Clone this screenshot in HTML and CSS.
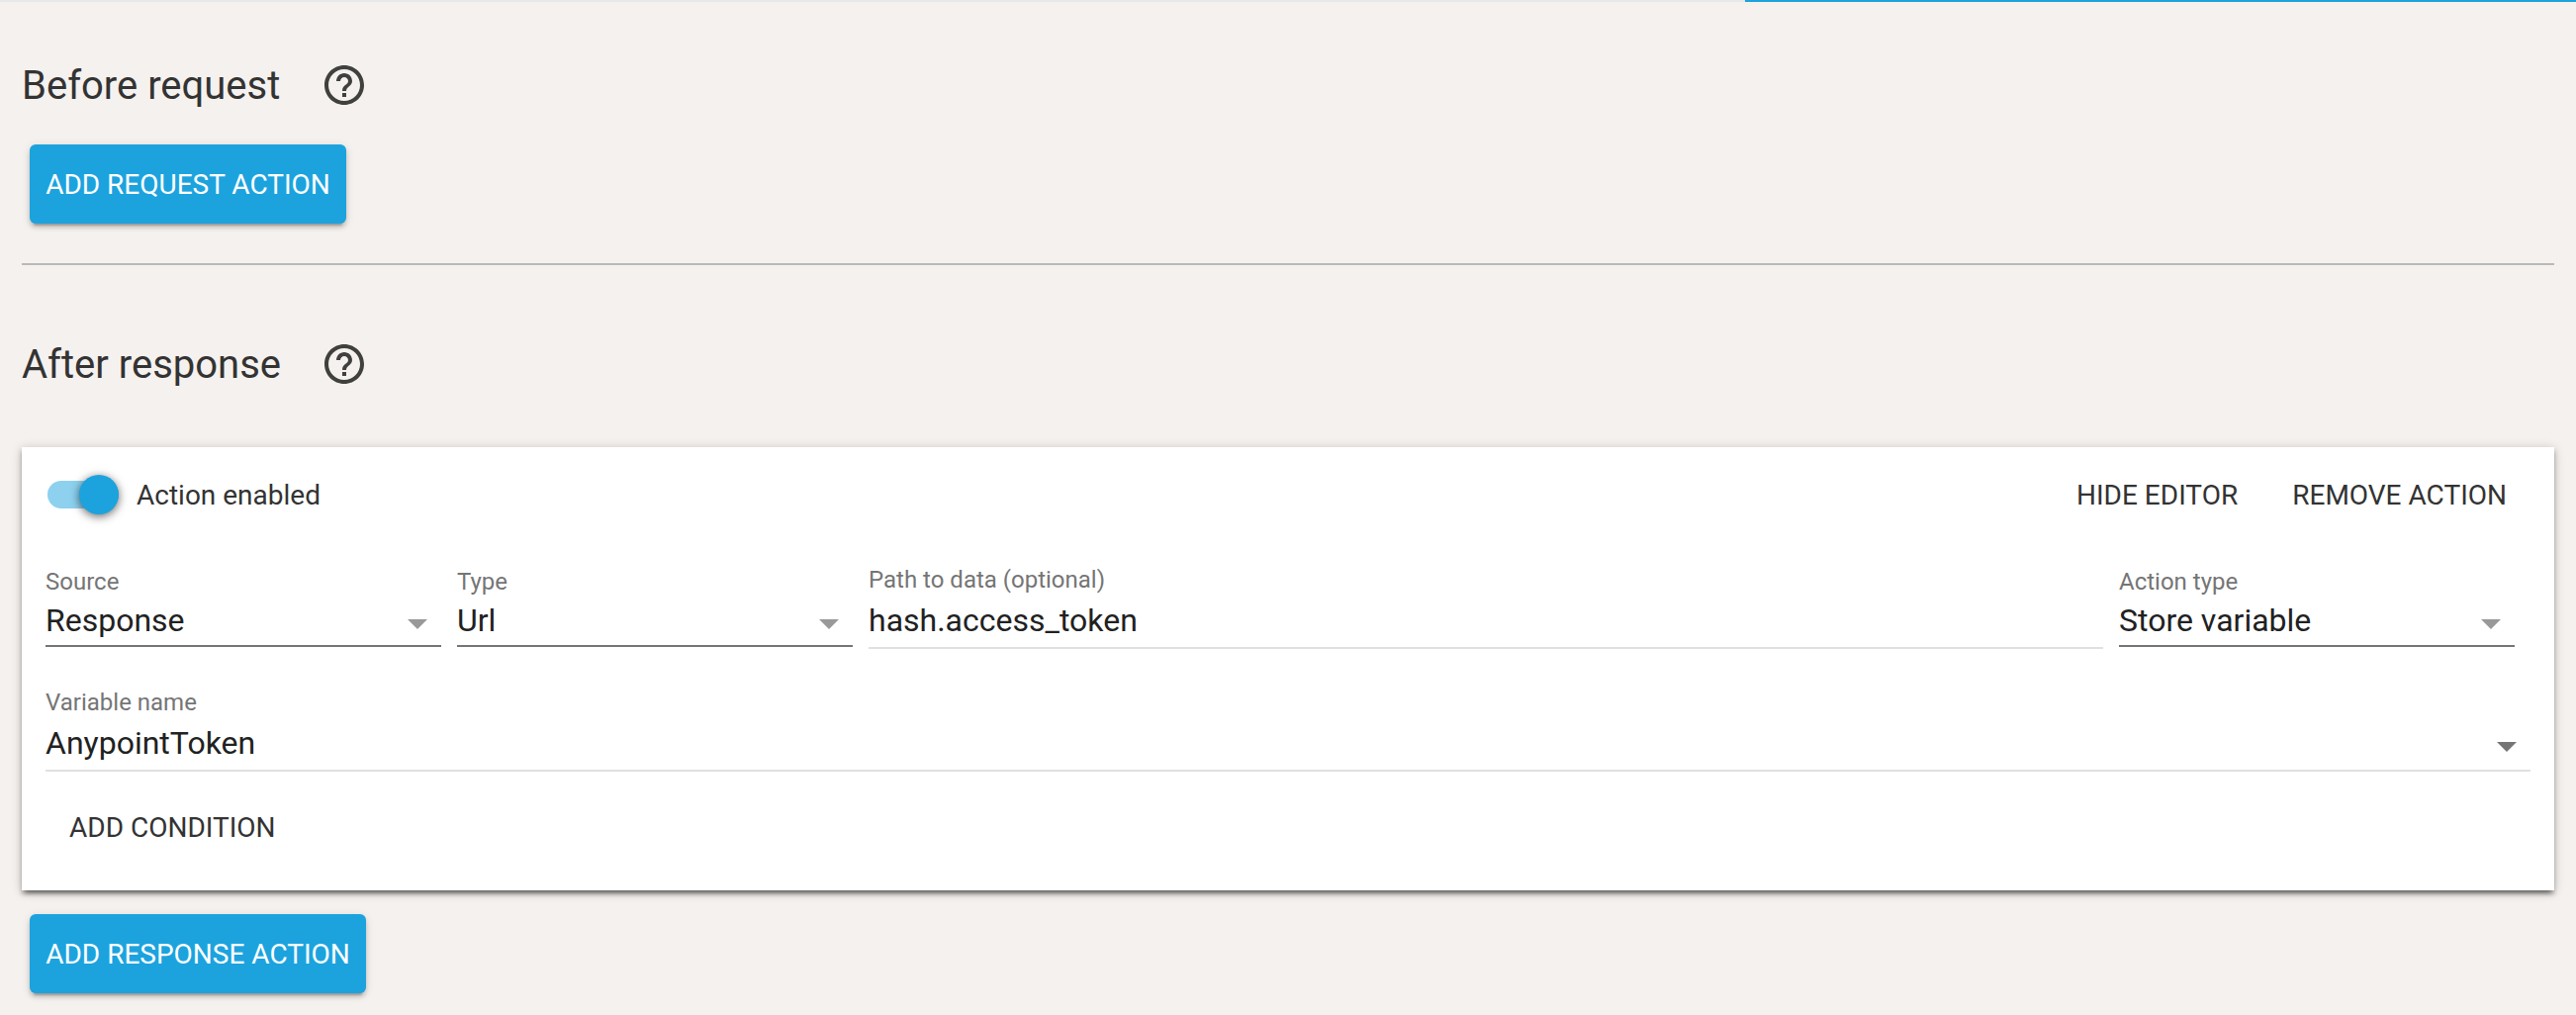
FILE: index.html
```html
<!DOCTYPE html>
<html lang="en">
<head>
<meta charset="utf-8">
<title>Request actions</title>
<link rel="stylesheet" href="styles.css">
</head>
<body>
<div class="tab-strip"><div class="tab-indicator"></div></div>
<main class="page">
  <section class="before">
    <header class="section-head">
      <h2>Before request</h2>
      <svg class="help" viewBox="0 0 24 24"><path d="M11 18h2v-2h-2v2zm1-16C6.48 2 2 6.48 2 12s4.480 10 10 10 10-4.480 10-10S17.520 2 12 2zm0 18c-4.410 0-8-3.590-8-8s3.590-8 8-8 8 3.590 8 8-3.590 8-8 8zm0-14c-2.210 0-4 1.790-4 4h2c0-1.100.9-2 2-2s2 .9 2 2c0 2-3 1.750-3 5h2c0-2.250 3-2.500 3-5 0-2.210-1.790-4-4-4z"/></svg>
    </header>
    <button class="raised add-request">ADD REQUEST ACTION</button>
  </section>
  <section class="after">
    <header class="section-head">
      <h2>After response</h2>
      <svg class="help" viewBox="0 0 24 24"><path d="M11 18h2v-2h-2v2zm1-16C6.48 2 2 6.48 2 12s4.480 10 10 10 10-4.480 10-10S17.520 2 12 2zm0 18c-4.410 0-8-3.590-8-8s3.590-8 8-8 8 3.590 8 8-3.590 8-8 8zm0-14c-2.210 0-4 1.790-4 4h2c0-1.100.9-2 2-2s2 .9 2 2c0 2-3 1.750-3 5h2c0-2.250 3-2.500 3-5 0-2.210-1.790-4-4-4z"/></svg>
    </header>
    <article class="card">
      <div class="card-head">
        <div class="toggle"><div class="knob"></div></div>
        <span class="toggle-label">Action enabled</span>
        <div class="card-actions">
          <button class="flat">HIDE EDITOR</button>
          <button class="flat">REMOVE ACTION</button>
        </div>
      </div>
      <div class="fields">
        <div class="field select">
          <label>Source</label>
          <div class="value"><span>Response</span><svg class="arrow" viewBox="0 0 20 10"><path d="M0 0h20L10 10z"/></svg></div>
        </div>
        <div class="field select">
          <label>Type</label>
          <div class="value"><span>Url</span><svg class="arrow" viewBox="0 0 20 10"><path d="M0 0h20L10 10z"/></svg></div>
        </div>
        <div class="field text">
          <label>Path to data (optional)</label>
          <div class="value"><span>hash.access_token</span></div>
        </div>
        <div class="field select">
          <label>Action type</label>
          <div class="value"><span>Store variable</span><svg class="arrow" viewBox="0 0 20 10"><path d="M0 0h20L10 10z"/></svg></div>
        </div>
      </div>
      <div class="field variable">
        <label>Variable name</label>
        <div class="value"><span>AnypointToken</span><svg class="arrow" viewBox="0 0 20 10"><path d="M0 0h20L10 10z"/></svg></div>
      </div>
      <button class="flat add-condition">ADD CONDITION</button>
    </article>
    <button class="raised add-response">ADD RESPONSE ACTION</button>
  </section>
</main>
</body>
</html>
```
FILE: styles.css
```css
* {
  box-sizing: border-box;
}

body {
  margin: 0;
  height: 1026px;
  overflow: hidden;
  background: #f5f1ee;
  color: #333;
  font-family: Roboto, sans-serif;
  -webkit-font-smoothing: antialiased;
}

button {
  margin: 0;
  border: 0;
  padding: 0;
  font: 400 28px/40px Roboto, sans-serif;
  white-space: nowrap;
}

.tab-strip {
  display: flex;
  justify-content: flex-end;
  height: 2px;
  background: #e8e8e8;
}

.tab-indicator {
  width: 840px;
  background: #1ca3de;
}

.page {
  padding: 0 22px;
}

.before {
  height: 266px;
  padding-top: 60px;
  border-bottom: 2px solid #b9b9bb;
}

.after {
  padding-top: 76px;
}

.section-head {
  display: flex;
  align-items: center;
  height: 48px;
}

h2 {
  width: 302px;
  margin: 0;
  padding-top: 2px;
  font-size: 40px;
  font-weight: 400;
  line-height: 48px;
}

.help {
  width: 48px;
  height: 48px;
  fill: #40403e;
}

.raised {
  display: block;
  height: 80px;
  margin-left: 8px;
  padding-top: 2px;
  border-radius: 6px;
  background: #1ca3de;
  color: #fff;
  box-shadow: 0 4px 4px rgba(0, 0, 0, .14), 0 2px 10px rgba(0, 0, 0, .12), 0 6px 2px -4px rgba(0, 0, 0, .2);
}

.add-request {
  width: 320px;
  margin-top: 36px;
}

.add-response {
  width: 340px;
  margin-top: 24px;
}

.card {
  height: 448px;
  margin-top: 60px;
  padding: 20px 24px 0;
  background: #fff;
  box-shadow:
    0 4px 4px rgba(0, 0, 0, .24),
    0 2px 10px rgba(0, 0, 0, .24),
    0 6px 4px -4px rgba(0, 0, 0, .36);
}

.card-head {
  display: flex;
  align-items: center;
  height: 56px;
}

.toggle {
  display: flex;
  align-items: center;
  justify-content: flex-end;
  width: 72px;
  height: 28px;
  margin-left: 2px;
  border-radius: 14px;
  background: #8dd1ef;
}

.knob {
  flex: none;
  width: 40px;
  height: 40px;
  border-radius: 50%;
  background: #1ca3de;
  box-shadow: 0 2px 10px rgba(0, 0, 0, .6);
}

.toggle-label {
  margin-left: 18px;
  padding-top: 1px;
  font-size: 28px;
  line-height: 40px;
}

.flat {
  background: none;
  color: #333;
}

.card-actions {
  display: flex;
  gap: 55px;
  margin: 1px 24px 0 auto;
}

.fields {
  display: flex;
  gap: 16px;
  height: 162px;
  padding: 38px 16px 0 0;
}

.field label {
  display: block;
  color: #757575;
  font-size: 24px;
  line-height: 40px;
}

.value {
  display: flex;
  justify-content: space-between;
  height: 50px;
  border-bottom: 2px solid #e0e0e0;
  color: #212121;
  font-size: 32px;
  line-height: 42px;
}

.arrow {
  width: 20px;
  height: 10px;
  margin: 20px 14px 0 0;
  fill: #757575;
}

.select {
  width: 400px;
  padding-top: 2px;
}

.select .value {
  height: 46px;
  border-color: #757575;
  line-height: 38px;
}

.select .arrow {
  margin-top: 18px;
  fill: #999;
}

.text {
  flex: 1;
}

.add-condition {
  display: block;
  margin: 37px 0 0 24px;
}
```
